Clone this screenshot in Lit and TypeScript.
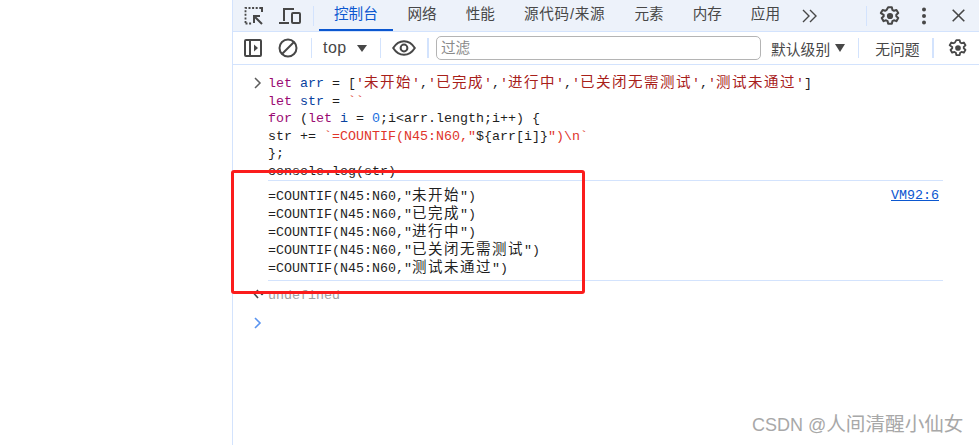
import { LitElement, html, css } from "lit";
import { customElement } from "lit/decorators.js";

const gear = (size: number) => html`<svg class="ico" width=${size} height=${size} viewBox="0 0 24 24"><path fill="none" stroke="#474747" stroke-width="2.2" stroke-linejoin="round" d="M10 2.500h4l.6 2.800 1.700 1 2.700-.9 2 3.400-2.100 1.900v1.600l2.100 1.900-2 3.400-2.700-.9-1.700 1-.6 2.800h-4l-.6-2.800-1.700-1-2.700.9-2-3.400 2.100-1.900v-1.600L2 8.800l2-3.400 2.700.9 1.700-1z"/><circle cx="12" cy="12" r="3.400" fill="#474747"/></svg>`;

const cjkRe = /([\u3400-\u9fff]+)/;
const mono = (t: string) =>
  t.split(cjkRe).map((p, i) => (i % 2 ? html`<span class="cjk">${p}</span>` : p));

@customElement("app-root")
export class AppRoot extends LitElement {
  static styles = css`
    :host { display: block; width: 979px; height: 445px; position: relative; overflow: hidden; background: #fff;
      font-family: "Liberation Sans", "Noto Sans CJK SC", sans-serif; color: #474747; }
    .page { display: flex; height: 445px; }
    .blank { width: 232px; flex: none; }
    .devtools { flex: 1; border-left: 1px solid #d3e3fd; display: flex; flex-direction: column; min-width: 0; }
    .tabs { height: 31px; background: #edf2fa; border-bottom: 1px solid #d3e3fd; display: flex; align-items: center; padding-left: 11px; flex: none; }
    .ico { display: block; flex: none; }
    .tab { height: 31px; box-sizing: border-box; padding: 1px 14.5px 0; font-size: 14.6px; line-height: 26px; white-space: nowrap; color: #474747; }
    .tab.wide { letter-spacing: 0.75px; }
    .tab.active { color: #0b57d0; border-bottom: 2px solid #0b57d0; padding: 1px 15px 0; width: 74px; }
    .sep { width: 1px; height: 20px; background: #d3e3fd; flex: none; }
    .sep.thick { width: 2px; }
    .filters { height: 32px; border-bottom: 1px solid #d3e3fd; display: flex; align-items: center; padding-left: 11px; flex: none; font-size: 14.8px; }
    .caret { width: 0; height: 0; border-left: 5px solid transparent; border-right: 5px solid transparent; border-top: 7px solid #474747; flex: none; }
    .top { margin-left: 11px; width: 34px; font-size: 16px; letter-spacing: 0.5px; color: #474747; }
    .filter { width: 319px; height: 22px; border: 1px solid #b4b4b4; border-radius: 5px; margin-left: 7px; padding-left: 4px; box-sizing: content-box; color: #8a8a8a; line-height: 22px; font-size: 14.6px; background: #fff; flex: none; }
    .console { flex: 1; padding: 10px 36px 0 20px; font-family: "Liberation Mono", "Noto Sans CJK SC", monospace; font-size: 13.33px; color: #1f1f1f; }
    .input { position: relative; padding-left: 15px; height: 105px; overflow: hidden; }
    .line { height: 17.5px; line-height: 17.5px; white-space: pre; }
    .chev { position: absolute; left: 0; top: 2px; }
    .cjk { font-size: 14.5px; letter-spacing: 1.5px; font-weight: 400; }
    .kw { color: #9a0a72; }
    .var { color: #0842a0; }
    .str { color: #a8201a; }
    .tpl { color: #e0352b; }
    .num { color: #1a6fe0; }
    .output { margin-left: 15px; border-top: 1px solid #d3e3fd; border-bottom: 1px solid #d3e3fd; height: 101px; box-sizing: border-box; padding-top: 6px; display: flex; justify-content: space-between; }
    .output .line { height: 18px; line-height: 18px; }
    .link { color: #0b57d0; text-decoration: underline; height: 18px; line-height: 18px; padding-right: 4px; }
    .result { position: relative; height: 27px; padding-left: 15px; color: #a0a0a0; line-height: 29px; }
    .result svg { position: absolute; left: 0; top: 8px; }
    .prompt { padding-top: 9px; }
    .annot { position: absolute; left: 231px; top: 170px; width: 348px; height: 118px; border: 3px solid #fb1c1c; border-radius: 3px; pointer-events: none; }
    .mark { position: absolute; left: 752px; top: 412px; font-size: 18px; line-height: 24px; color: #a8a8a8; white-space: nowrap; }
    .mark span { font-size: 19.6px; }
  `;

  render() {
    return html`
      <div class="page">
        <div class="blank"></div>
        <div class="devtools">
          <div class="tabs">
            <svg class="ico" width="20" height="20" viewBox="0 0 20 20"><path fill="none" stroke="#474747" stroke-width="1.800" stroke-dasharray="2 1.600" d="M1.500 17V2h15.500M1.500 17.500h6"/><path fill="none" stroke="#474747" stroke-width="2" d="M18 1v5M9 10h7M10 10v7M10 10l8 8"/></svg>
            <svg class="ico" style="margin-left:14px" width="23" height="20" viewBox="0 0 23 20"><path fill="none" stroke="#474747" stroke-width="2" d="M6 15V3h10M1 17h10"/><rect x="14" y="7" width="8" height="10" rx="1" fill="none" stroke="#474747" stroke-width="2"/></svg>
            <div class="sep" style="margin:0 5px 0 12px"></div>
            <div class="tab active">控制台</div>
            <div class="tab">网络</div>
            <div class="tab">性能</div>
            <div class="tab wide">源代码/来源</div>
            <div class="tab">元素</div>
            <div class="tab">内存</div>
            <div class="tab">应用</div>
            <svg class="ico" style="margin-left:7px" width="16" height="14" viewBox="0 0 16 14"><path fill="none" stroke="#474747" stroke-width="1.400" d="M1 1l6 6-6 6M8 1l6 6-6 6"/></svg>
            <div class="sep" style="margin-left:48px"></div>
            <div style="margin-left:12px">${gear(22)}</div>
            <svg class="ico" style="margin-left:21px" width="4" height="18" viewBox="0 0 4 18"><circle cx="2" cy="2.500" r="2" fill="#474747"/><circle cx="2" cy="9" r="2" fill="#474747"/><circle cx="2" cy="15.500" r="2" fill="#474747"/></svg>
            <svg class="ico" style="margin-left:26px" width="13" height="13" viewBox="0 0 13 13"><path stroke="#474747" stroke-width="1.600" d="M.7.7l11.600 11.600M12.300.7L.7 12.300"/></svg>
          </div>
          <div class="filters">
            <svg class="ico" width="18" height="18" viewBox="0 0 18 18"><rect x="1" y="1" width="16" height="16" rx="1" fill="none" stroke="#474747" stroke-width="2"/><path stroke="#474747" stroke-width="2" d="M6 1v16"/><path fill="#474747" d="M10 5.500l4 3.500-4 3.500z"/></svg>
            <svg class="ico" style="margin-left:16px" width="20" height="20" viewBox="0 0 20 20"><circle cx="10" cy="10" r="8.500" fill="none" stroke="#474747" stroke-width="2"/><path stroke="#474747" stroke-width="2" d="M4 16L16 4"/></svg>
            <div class="sep" style="margin-left:13px"></div>
            <div class="top">top</div>
            <div class="caret"></div>
            <div class="sep" style="margin-left:13px"></div>
            <svg class="ico" style="margin-left:11px" width="24" height="16" viewBox="0 0 24 16"><path fill="none" stroke="#474747" stroke-width="2" d="M1.200 8C4 3.500 7.700 1.200 12 1.200S20 3.500 22.800 8C20 12.500 16.300 14.800 12 14.800S4 12.500 1.200 8z"/><circle cx="12" cy="8" r="3.400" fill="none" stroke="#474747" stroke-width="2"/></svg>
            <div class="sep thick" style="margin-left:11px"></div>
            <div class="filter">过滤</div>
            <div style="margin-left:10px;white-space:nowrap">默认级别</div>
            <div class="caret" style="margin-left:5px;border-top-width:8px"></div>
            <div class="sep" style="margin-left:13px"></div>
            <div style="margin-left:16px;white-space:nowrap">无问题</div>
            <div class="sep thick" style="margin-left:12px"></div>
            <div style="margin-left:14px">${gear(20)}</div>
          </div>
          <div class="console">
            <div class="input">
              <svg class="chev" width="9" height="12" viewBox="0 0 9 12"><path fill="none" stroke="#5c5c5c" stroke-width="1.500" d="M2 1l5 5-5 5"/></svg>
              <div class="line"><span class="kw">let</span> <span class="var">arr</span> = [<span class="str">'${mono("未开始")}'</span>,<span class="str">'${mono("已完成")}'</span>,<span class="str">'${mono("进行中")}'</span>,<span class="str">'${mono("已关闭无需测试")}'</span>,<span class="str">'${mono("测试未通过")}'</span>]</div>
              <div class="line"><span class="kw">let</span> <span class="var">str</span> = <span class="tpl">\`\`</span></div>
              <div class="line"><span class="kw">for</span> (<span class="kw">let</span> <span class="var">i</span> = <span class="num">0</span>;i&lt;arr.length;i++) {</div>
              <div class="line">str += <span class="tpl">\`=COUNTIF(N45:N60,"</span>\${arr[i]}<span class="tpl">")\\n\`</span></div>
              <div class="line">};</div>
              <div class="line">console.log(str)</div>
            </div>
            <div class="output">
              <div>
                <div class="line">=COUNTIF(N45:N60,"${mono("未开始")}")</div>
                <div class="line">=COUNTIF(N45:N60,"${mono("已完成")}")</div>
                <div class="line">=COUNTIF(N45:N60,"${mono("进行中")}")</div>
                <div class="line">=COUNTIF(N45:N60,"${mono("已关闭无需测试")}")</div>
                <div class="line">=COUNTIF(N45:N60,"${mono("测试未通过")}")</div>
              </div>
              <div class="link">VM92:6</div>
            </div>
            <div class="result">
              <svg width="11" height="10" viewBox="0 0 11 10"><path fill="none" stroke="#474747" stroke-width="1.600" d="M5 1L1.500 5 5 9"/><circle cx="9" cy="5" r="1.300" fill="#474747"/></svg>
              undefined
            </div>
            <div class="prompt">
              <svg class="ico" width="9" height="12" viewBox="0 0 9 12"><path fill="none" stroke="#5a94f0" stroke-width="1.600" d="M2 1l5 5-5 5"/></svg>
            </div>
          </div>
        </div>
      </div>
      <div class="annot"></div>
      <div class="mark">CSDN @<span>人间清醒小仙女</span></div>
    `;
  }
}
